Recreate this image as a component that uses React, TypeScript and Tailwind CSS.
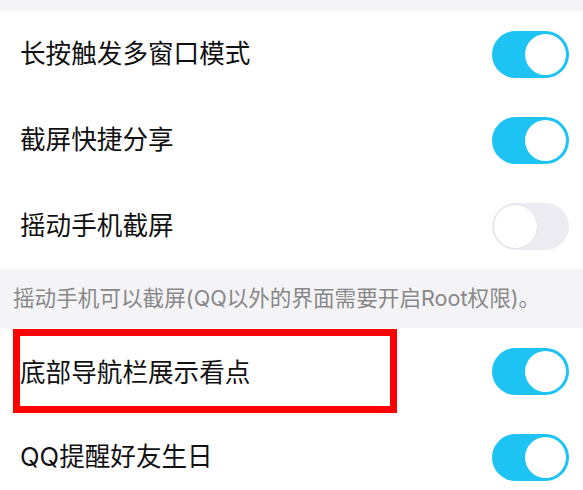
import React from 'react';

const Toggle = ({ on }: { on: boolean }) =>
  on ? (
    <div className="w-[77px] h-[47px] rounded-full bg-[#1cc3f3] flex items-center justify-end pr-[3px]">
      <div className="w-[41px] h-[41px] rounded-full bg-white" />
    </div>
  ) : (
    <div className="w-[77px] h-[47px] rounded-full bg-[#ececf2] flex items-center justify-start pl-[1px]">
      <div className="w-[45px] h-[45px] rounded-full bg-white border border-[#e2e2ea]" />
    </div>
  );

const Row = ({ label, on, boxed }: { label: string; on: boolean; boxed?: boolean }) => (
  <div className="relative h-[86px] flex items-center justify-between pl-[20px] pr-[14px]">
    <span className={`text-[25.6px] text-[#111] leading-none ${boxed ? 'pt-[4px]' : ''}`}>{label}</span>
    <Toggle on={on} />
    {boxed && (
      <div className="absolute left-[13px] top-[1px] w-[384px] h-[84px] border-[7px] border-[#ff0000]" />
    )}
  </div>
);

export default function App() {
  return (
    <div className="w-[583px] h-[490px] overflow-hidden bg-white" style={{ fontFamily: 'Inter, "Noto Sans CJK SC", sans-serif' }}>
      <div className="h-[11px] bg-[#f4f4f7]" />
      <Row label="长按触发多窗口模式" on />
      <Row label="截屏快捷分享" on />
      <Row label="摇动手机截屏" on={false} />
      <div className="h-[59px] bg-[#f4f4f7] flex items-center pl-[13px]">
        <span className="text-[21.6px] text-[#888] leading-none">摇动手机可以截屏(QQ以外的界面需要开启Root权限)。</span>
      </div>
      <Row label="底部导航栏展示看点" on boxed />
      <Row label="QQ提醒好友生日" on />
    </div>
  );
}
